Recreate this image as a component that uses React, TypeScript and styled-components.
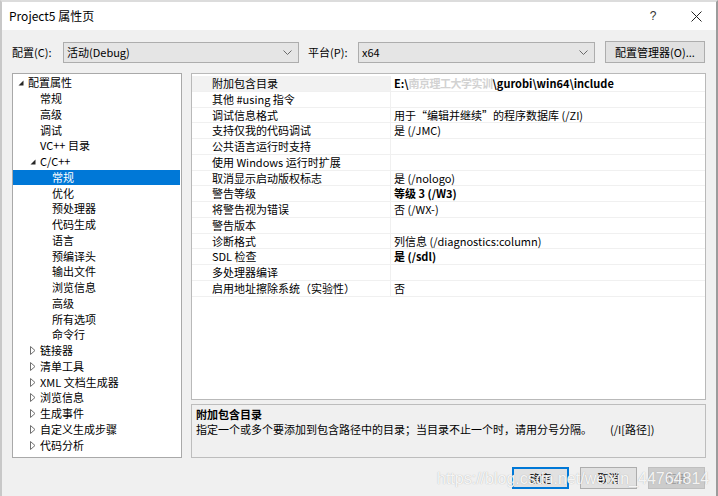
import React from 'react';
import styled, { createGlobalStyle } from 'styled-components';

const GlobalStyle = createGlobalStyle`
  html, body {
    margin: 0;
    padding: 0;
    background: #f0f0f0;
  }
  body {
    font-family: "Noto Sans CJK SC", "Noto Sans", sans-serif;
    font-size: 11px;
    color: #000;
  }
  * { box-sizing: border-box; }
`;

type TreeItem = { label: string; level: number; arrow?: 'open' | 'closed'; selected?: boolean };

const treeItems: TreeItem[] = [
  { label: '配置属性', level: 0, arrow: 'open' },
  { label: '常规', level: 1 },
  { label: '高级', level: 1 },
  { label: '调试', level: 1 },
  { label: 'VC++ 目录', level: 1 },
  { label: 'C/C++', level: 1, arrow: 'open' },
  { label: '常规', level: 2, selected: true },
  { label: '优化', level: 2 },
  { label: '预处理器', level: 2 },
  { label: '代码生成', level: 2 },
  { label: '语言', level: 2 },
  { label: '预编译头', level: 2 },
  { label: '输出文件', level: 2 },
  { label: '浏览信息', level: 2 },
  { label: '高级', level: 2 },
  { label: '所有选项', level: 2 },
  { label: '命令行', level: 2 },
  { label: '链接器', level: 1, arrow: 'closed' },
  { label: '清单工具', level: 1, arrow: 'closed' },
  { label: 'XML 文档生成器', level: 1, arrow: 'closed' },
  { label: '浏览信息', level: 1, arrow: 'closed' },
  { label: '生成事件', level: 1, arrow: 'closed' },
  { label: '自定义生成步骤', level: 1, arrow: 'closed' },
  { label: '代码分析', level: 1, arrow: 'closed' },
];

type Prop = { name: string; value?: string; bold?: boolean };

const props: Prop[] = [
  { name: '附加包含目录' },
  { name: '其他 #using 指令' },
  { name: '调试信息格式', value: '用于“编辑并继续”的程序数据库 (/ZI)' },
  { name: '支持仅我的代码调试', value: '是 (/JMC)' },
  { name: '公共语言运行时支持' },
  { name: '使用 Windows 运行时扩展' },
  { name: '取消显示启动版权标志', value: '是 (/nologo)' },
  { name: '警告等级', value: '等级 3 (/W3)', bold: true },
  { name: '将警告视为错误', value: '否 (/WX-)' },
  { name: '警告版本' },
  { name: '诊断格式', value: '列信息 (/diagnostics:column)' },
  { name: 'SDL 检查', value: '是 (/sdl)', bold: true },
  { name: '多处理器编译' },
  { name: '启用地址擦除系统（实验性）', value: '否' },
];

const Window = styled.div`
  position: relative;
  width: 718px;
  height: 496px;
  overflow: hidden;
  display: flex;
  flex-direction: column;
  background: #f0f0f0;
  border-top: 2px solid #dcdcdc;
  border-left: 2px solid #c8c8c8;
  border-right: 2px solid #9c9c9c;
`;

const TitleBar = styled.div`
  height: 28px;
  flex: none;
  display: flex;
  align-items: center;
  background: #fff;
  padding-left: 7px;
`;

const Title = styled.span`
  font-size: 12px;
  line-height: 16px;
`;

const TitleButtons = styled.div`
  margin-left: auto;
  display: flex;
  gap: 3px;
`;

const TitleButton = styled.div`
  width: 40px;
  height: 28px;
  display: flex;
  align-items: center;
  justify-content: center;
  font-family: "Liberation Sans", sans-serif;
  font-size: 12px;
  color: #333;
`;

const Body = styled.div`
  flex: 1;
  display: flex;
  flex-direction: column;
  padding: 0 10px;
`;

const Toolbar = styled.div`
  margin-top: 11px;
  height: 22px;
  display: flex;
  align-items: center;
`;

const Label = styled.span<{ $w: number; $ml?: number }>`
  width: ${(p) => p.$w}px;
  margin-left: ${(p) => p.$ml ?? 0}px;
  line-height: 16px;
`;

const Combo = styled.div<{ $w: number }>`
  width: ${(p) => p.$w}px;
  height: 21px;
  display: flex;
  align-items: center;
  padding: 0 6px 0 3px;
  background: #e5e5e5;
  border: 1px solid #adadad;
  line-height: 16px;

  svg {
    margin-left: auto;
  }
`;

const ToolButton = styled.div`
  margin-left: 10px;
  width: 100px;
  height: 22px;
  display: flex;
  align-items: center;
  justify-content: center;
  background: #e1e1e1;
  border: 1px solid #adadad;
  line-height: 16px;
`;

const Main = styled.div`
  margin-top: 10px;
  height: 385px;
  display: flex;
  gap: 9px;
`;

const Tree = styled.div`
  width: 170px;
  flex: none;
  background: #fff;
  border: 1px solid #a9a9a9;
  padding-top: 1px;
`;

const TreeRow = styled.div<{ $level: number; $selected?: boolean }>`
  height: 15.75px;
  display: flex;
  align-items: center;
  margin-right: 1px;
  padding-left: ${(p) => 2 + p.$level * 12}px;
  line-height: 15px;
  white-space: nowrap;
  background: ${(p) => (p.$selected ? '#0078d7' : 'transparent')};
  color: ${(p) => (p.$selected ? '#fff' : '#000')};
`;

const ArrowBox = styled.span`
  width: 13px;
  flex: none;
  display: flex;
  align-items: center;
  padding-left: 3px;
`;

const Right = styled.div`
  flex: 1;
  display: flex;
  flex-direction: column;
  gap: 4px;
`;

const Grid = styled.div`
  height: 327px;
  flex: none;
  background: #fff;
  border: 1px solid #b9b9b9;
  padding-top: 2px;
`;

const GridRow = styled.div`
  height: 15.75px;
  display: grid;
  grid-template-columns: 198px 1fr;
  border-bottom: 1px solid #f0f0f0;
  line-height: 14px;
`;

const NameCell = styled.div<{ $active?: boolean }>`
  padding-left: 20px;
  white-space: nowrap;
  background: ${(p) => (p.$active ? '#f2f2f2' : 'transparent')};
`;

const ValueCell = styled.div<{ $bold?: boolean }>`
  padding-left: 3px;
  border-left: 1px solid #f0f0f0;
  white-space: nowrap;
  font-weight: ${(p) => (p.$bold ? 700 : 400)};
`;

const Redacted = styled.span`
  color: #d2d2d2;
  letter-spacing: -0.5px;
`;

const Desc = styled.div`
  flex: 1;
  border: 1px solid #bdbdbd;
  padding: 2px 4px 0;
  line-height: 15px;
`;

const DescTitle = styled.div`
  font-weight: 700;
`;

const Switch = styled.span`
  margin-left: 18px;
`;

const Footer = styled.div`
  margin-top: 9px;
  height: 22px;
  display: flex;
  justify-content: flex-end;
  gap: 11px;
  padding-right: 1px;
`;

const Button = styled.div<{ $variant?: 'default' | 'disabled' }>`
  width: 57px;
  height: 22px;
  display: flex;
  align-items: center;
  justify-content: center;
  line-height: 16px;
  background: ${(p) => (p.$variant === 'disabled' ? '#cccccc' : '#e1e1e1')};
  color: ${(p) => (p.$variant === 'disabled' ? '#9a9a9a' : '#000')};
  border: ${(p) =>
    p.$variant === 'default' ? '2px solid #0078d7' : p.$variant === 'disabled' ? '1px solid #bfbfbf' : '1px solid #adadad'};
`;

/* CSDN watermark stamped over the bottom-right corner of the screenshot */
const Watermark = styled.div`
  position: absolute;
  left: 435px;
  top: 467px;
  font-family: "Liberation Sans", Arial, sans-serif;
  font-size: 16px;
  line-height: 20px;
  color: rgba(255, 255, 255, 0.9);
  text-shadow: 0 0 1px rgba(150, 150, 150, 0.8);
  white-space: nowrap;
  pointer-events: none;
`;

const Chevron = () => (
  <svg width="9" height="5" viewBox="0 0 9 5">
    <path d="M0.5 0.5 L4.5 4.5 L8.5 0.5" fill="none" stroke="#6a6a6a" strokeWidth="1" />
  </svg>
);

const Arrow = ({ kind }: { kind: 'open' | 'closed' }) =>
  kind === 'open' ? (
    <svg width="6" height="6" viewBox="0 0 6 6">
      <path d="M5.5 0.5 L5.5 5.5 L0.5 5.5 Z" fill="#262626" />
    </svg>
  ) : (
    <svg width="6" height="9" viewBox="0 0 6 9">
      <path d="M0.5 0.5 L5 4.5 L0.5 8.5 Z" fill="none" stroke="#707070" strokeWidth="1" />
    </svg>
  );

const CloseIcon = () => (
  <svg width="11" height="11" viewBox="0 0 11 11">
    <path d="M0.5 0.5 L10.5 10.5 M10.5 0.5 L0.5 10.5" stroke="#222" strokeWidth="1" />
  </svg>
);

export default function App() {
  return (
    <>
      <GlobalStyle />
      <Window>
        <TitleBar>
          <Title>Project5 属性页</Title>
          <TitleButtons>
            <TitleButton>?</TitleButton>
            <TitleButton>
              <CloseIcon />
            </TitleButton>
          </TitleButtons>
        </TitleBar>
        <Body>
          <Toolbar>
            <Label $w={51}>配置(C):</Label>
            <Combo $w={236}>
              活动(Debug)
              <Chevron />
            </Combo>
            <Label $w={50} $ml={9}>
              平台(P):
            </Label>
            <Combo $w={237}>
              x64
              <Chevron />
            </Combo>
            <ToolButton>配置管理器(O)...</ToolButton>
          </Toolbar>
          <Main>
            <Tree>
              {treeItems.map((t, i) => (
                <TreeRow key={i} $level={t.level} $selected={t.selected}>
                  <ArrowBox>{t.arrow && <Arrow kind={t.arrow} />}</ArrowBox>
                  {t.label}
                </TreeRow>
              ))}
            </Tree>
            <Right>
              <Grid>
                {props.map((p, i) => (
                  <GridRow key={i}>
                    <NameCell $active={i === 0}>{p.name}</NameCell>
                    {i === 0 ? (
                      <ValueCell $bold>
                        E:\<Redacted>南京理工大学实训</Redacted>\gurobi\win64\include
                      </ValueCell>
                    ) : (
                      <ValueCell $bold={p.bold}>{p.value}</ValueCell>
                    )}
                  </GridRow>
                ))}
              </Grid>
              <Desc>
                <DescTitle>附加包含目录</DescTitle>
                <div>
                  指定一个或多个要添加到包含路径中的目录；当目录不止一个时，请用分号分隔。
                  <Switch>(/I[路径])</Switch>
                </div>
              </Desc>
            </Right>
          </Main>
          <Footer>
            <Button $variant="default">确定</Button>
            <Button>取消</Button>
            <Button $variant="disabled">应用</Button>
          </Footer>
        </Body>
        <Watermark>https://blog.csdn.net/weixin_44764814</Watermark>
      </Window>
    </>
  );
}
